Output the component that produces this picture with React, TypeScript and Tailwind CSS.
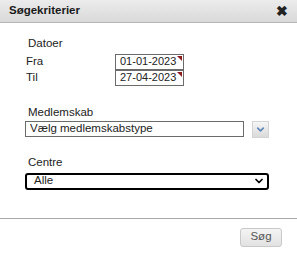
import { ChevronDown } from "lucide-react";

const font = { fontFamily: '"Liberation Sans", Arial, sans-serif' };

function DateField({ value, className = "" }: { value: string; className?: string }) {
  return (
    <div className={`relative flex h-[16px] w-[69px] items-center border border-[#6b6b6b] bg-white pl-[4px] text-[11px] leading-none text-[#222] ${className}`}>
      {value}
      <span className="absolute right-[1px] top-[1px] h-0 w-0 border-l-[5px] border-t-[5px] border-l-transparent border-t-[#8e1b1b]" />
    </div>
  );
}

export default function App() {
  return (
    <div className="h-[256px] w-[297px] bg-white text-[11.5px] text-[#222]" style={font}>
      <div className="flex h-[23px] items-center justify-between border-b border-[#b5b5b5] bg-gradient-to-b from-[#ececec] to-[#d9d9d9] pl-[9px] pr-[9px]">
        <span className="text-[11.5px] font-bold text-[#1a1a1a]">Søgekriterier</span>
        <span className="text-[14px] font-bold leading-none text-[#222]">✖</span>
      </div>

      <div className="pl-[25px] pt-[13px]">
        <div className="pl-[3px] leading-[14px]">Datoer</div>
        <div className="mt-[3px] flex flex-col">
          <div className="flex items-center">
            <span className="w-[90px] pl-[1px]">Fra</span>
            <DateField value="01-01-2023" />
          </div>
          <div className="-mt-px flex items-center">
            <span className="w-[90px] pl-[1px]">Til</span>
            <DateField value="27-04-2023" />
          </div>
        </div>

        <div className="mt-[18px] pl-[3px] leading-[14px]">Medlemskab</div>
        <div className="mt-[2px] flex items-center">
          <div className="flex h-[16px] w-[219px] items-center border border-[#6b6b6b] pl-[4px] leading-none">
            Vælg medlemskabstype
          </div>
          <div className="ml-[8px] flex h-[17px] w-[17px] items-center justify-center border border-[#d4d4d4] bg-gradient-to-b from-[#f6f6f6] to-[#dadada]">
            <ChevronDown size={11} strokeWidth={3.5} className="text-[#5f86b8]" />
          </div>
        </div>

        <div className="mt-[17px] pl-[3px] leading-[14px]">Centre</div>
        <div className="mt-[4px] flex h-[17px] w-[244px] items-center justify-between rounded-[3px] border-2 border-black pl-[7px] pr-[2px] leading-none">
          <span>Alle</span>
          <ChevronDown size={12} strokeWidth={3.5} className="text-black" />
        </div>
      </div>

      <div className="mt-[28px] border-t border-[#a8a8a8]" />
      <div className="flex justify-end pr-[15px] pt-[9px]">
        <button className="h-[19px] w-[42px] rounded-[3px] border border-[#c9c9c9] bg-gradient-to-b from-[#f4f4f4] to-[#e2e2e2] text-[11.5px] leading-none text-[#555]">
          Søg
        </button>
      </div>
    </div>
  );
}
